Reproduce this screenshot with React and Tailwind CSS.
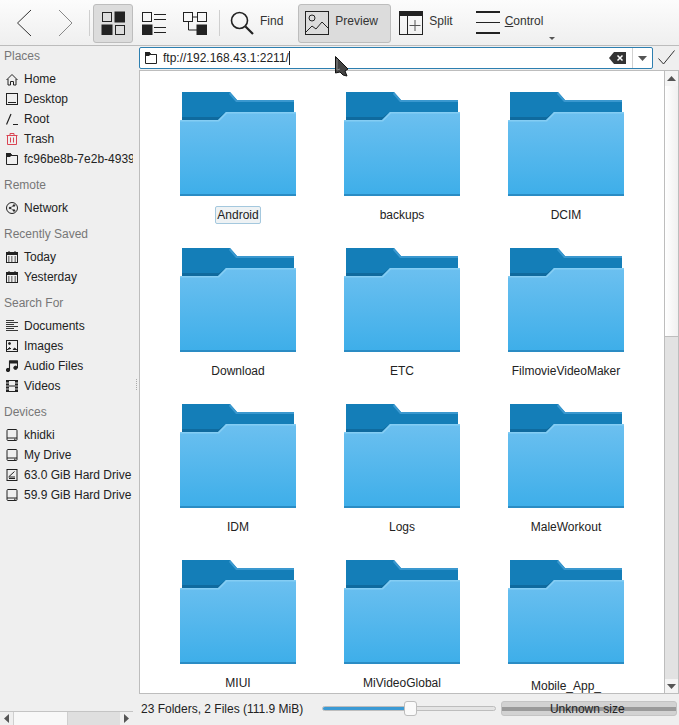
import React from "react";

const K = "#222";

const IconsView = () => (
  <svg width="24" height="24" viewBox="0 0 24 24" fill="none" stroke={K}>
    <rect x="1.5" y="1.5" width="9" height="9" />
    <rect x="14" y="1" width="10" height="10" fill={K} />
    <rect x="1" y="14" width="10" height="10" fill={K} />
    <rect x="14.5" y="14.5" width="9" height="9" />
  </svg>
);
const ListView = () => (
  <svg width="24" height="24" viewBox="0 0 24 24" fill="none" stroke={K}>
    <rect x="0.5" y="1.5" width="9" height="9" />
    <path d="M12 3.5h12M12 8.5h12M12 16.5h12M12 21.5h12" />
    <rect x="0" y="14" width="10" height="10" fill={K} />
  </svg>
);
const TreeView = () => (
  <svg width="24" height="24" viewBox="0 0 24 24" fill="none" stroke={K}>
    <rect x="0.5" y="1.5" width="9" height="9" />
    <rect x="14.5" y="1.5" width="9" height="9" />
    <path d="M9.5 6h5M5.5 10.5v8.500h8.500" />
    <rect x="14" y="14" width="10" height="10" fill={K} />
  </svg>
);
const FindIcon = () => (
  <svg width="24" height="24" viewBox="0 0 24 24" fill="none" stroke={K}>
    <circle cx="9.500" cy="9.500" r="8" strokeWidth="1.600" />
    <path d="M15.500 15.500L23 23" strokeWidth="2.200" />
  </svg>
);
const PreviewIcon = () => (
  <svg width="24" height="24" viewBox="0 0 24 24" fill="none" stroke={K}>
    <rect x="0.500" y="0.500" width="23" height="23" />
    <circle cx="7" cy="7" r="3" />
    <path d="M1 21l6-6 4 3 6-7 6 6" />
  </svg>
);
const SplitIcon = () => (
  <svg width="24" height="24" viewBox="0 0 24 24" fill="none" stroke={K}>
    <rect x="0.500" y="0.500" width="23" height="23" />
    <rect x="0" y="0" width="24" height="5" fill={K} stroke="none" />
    <path d="M8.500 5v19" />
    <path d="M16 9v11M10.500 14.500h11" stroke="#555" />
  </svg>
);
const ControlIcon = () => (
  <svg width="24" height="24" viewBox="0 0 24 24" fill={K}>
    <rect x="0" y="0" width="24" height="2" />
    <rect x="0" y="11" width="24" height="1" />
    <rect x="0" y="21" width="24" height="2" />
  </svg>
);

const FolderSmall = () => (
  <svg width="12" height="12" viewBox="0 0 12 12" fill="none" stroke={K}>
    <path d="M0.500 0.500h4l1.500 2h5.500v9h-11z" />
    <path d="M0 0h4.500l1.500 2.500h6v0.500H5l-1 1H0z" fill={K} stroke="none" />
  </svg>
);

const iconProps = { width: 12, height: 12, viewBox: "0 0 12 12", fill: "none", stroke: K };

const sideIcons = {
  home: (
    <svg {...{ ...iconProps, width: 13, height: 13 }}>
      <path d="M0.500 6.500L6 1l5.500 5.500M2 5.500v6h2.500V8h3v3.500H10v-6" />
    </svg>
  ),
  desktop: (
    <svg {...iconProps}>
      <rect x="0.500" y="0.500" width="11" height="11" />
      <path d="M2 9.500h8" />
    </svg>
  ),
  root: (
    <svg {...iconProps}>
      <path d="M0.500 11.500L5 1M7 11.500h5" strokeWidth="1.200" />
    </svg>
  ),
  trash: (
    <svg {...iconProps} stroke="#da4453">
      <path d="M0.500 2.500h11M4 2.500V0.500h4v2M1.500 2.500v9h9v-9M4.500 4.500v5M7.500 4.500v5" />
    </svg>
  ),
  folder: <FolderSmall />,
  network: (
    <svg {...iconProps}>
      <circle cx="6" cy="6" r="5.500" />
      <circle cx="4" cy="6" r="0.800" fill={K} />
      <circle cx="8" cy="3.500" r="0.800" fill={K} />
      <circle cx="8" cy="8.500" r="0.800" fill={K} />
      <path d="M4 6l4-2.500M4 6l4 2.500" strokeWidth="0.600" />
    </svg>
  ),
  calendar: (
    <svg {...iconProps}>
      <rect x="0.500" y="1.500" width="11" height="10" />
      <path d="M0 2h12v1.500H0zM3 0v2M9 0v2" fill={K} />
      <path d="M2 6h1.500M5 6h1.500M8.500 6H10M2 8h1.500M5 8h1.500M8.500 8H10M2 10h1.500M5 10h1.500M8.500 10H10" strokeWidth="1.100" />
    </svg>
  ),
  docs: (
    <svg {...iconProps}>
      <path d="M0 0.500h8M0 2.500h12M0 4.500h8M0 6.500h12M0 8.500h8M0 10.500h12" strokeWidth="0.900" />
    </svg>
  ),
  image: (
    <svg {...iconProps}>
      <rect x="0.500" y="0.500" width="11" height="11" />
      <circle cx="3.500" cy="3.500" r="1" fill={K} />
      <path d="M1 10l2.500-2.500 1.500 1.500 M7 10l1.500-2 2.500 2" fill={K} />
    </svg>
  ),
  audio: (
    <svg {...iconProps}>
      <path d="M3.500 10V1h8v7" strokeWidth="1.100" />
      <path d="M3.500 1h8v2h-8z" fill={K} />
      <circle cx="2" cy="10" r="1.700" fill={K} />
      <circle cx="9.500" cy="7.800" r="1.700" fill={K} />
    </svg>
  ),
  video: (
    <svg {...iconProps}>
      <rect x="0.500" y="0.500" width="11" height="11" />
      <path d="M0 0h3v12H0zM9 0h3v12H9z" fill={K} stroke="none" />
      <path d="M0 3h3M0 6h3M0 9h3M9 3h3M9 6h3M9 9h3" stroke="#eee" strokeWidth="0.800" />
      <path d="M3 6h6" />
    </svg>
  ),
  drive: (
    <svg {...iconProps}>
      <rect x="1" y="0.500" width="10" height="11" rx="1" />
      <path d="M1 9h10" />
      <path d="M8 10.200h1.500" />
    </svg>
  ),
  driveMounted: (
    <svg {...iconProps}>
      <rect x="1" y="0.500" width="10" height="11" />
      <path d="M2.500 8L8.500 2.500M3 8h6M3 9.500h6" />
    </svg>
  ),
};

const sections = [
  {
    title: "Places",
    first: true,
    items: [
      ["home", "Home"],
      ["desktop", "Desktop"],
      ["root", "Root"],
      ["trash", "Trash"],
      ["folder", "fc96be8b-7e2b-4939-a1b2"],
    ],
  },
  { title: "Remote", items: [["network", "Network"]] },
  {
    title: "Recently Saved",
    items: [
      ["calendar", "Today"],
      ["calendar", "Yesterday"],
    ],
  },
  {
    title: "Search For",
    items: [
      ["docs", "Documents"],
      ["image", "Images"],
      ["audio", "Audio Files"],
      ["video", "Videos"],
    ],
  },
  {
    title: "Devices",
    items: [
      ["drive", "khidki"],
      ["drive", "My Drive"],
      ["driveMounted", "63.0 GiB Hard Drive"],
      ["drive", "59.9 GiB Hard Drive"],
    ],
  },
];

const folders = [
  "Android",
  "backups",
  "DCIM",
  "Download",
  "ETC",
  "FilmovieVideoMaker",
  "IDM",
  "Logs",
  "MaleWorkout",
  "MIUI",
  "MiVideoGlobal",
  "Mobile_App_",
];

const FolderIcon = () => (
  <svg className="shrink-0" width="116" height="104" viewBox="0 0 116 104">
    <defs>
      <linearGradient id="front" x1="0" y1="0" x2="0" y2="1">
        <stop offset="0" stopColor="#6cc0f0" />
        <stop offset="1" stopColor="#3daee9" />
      </linearGradient>
    </defs>
    <path d="M2 0h48l7 8h57v20H2z" fill="#147eb8" />
    <path d="M50 0l7 8h57v2H56l-7-8z" fill="#3a98cf" />
    <path d="M0 28h38l8-8h70v84H0z" fill="url(#front)" />
    <path d="M2 25h37l7-5 -8 8H2z" fill="#0f6a9e" />
    <path d="M0 28h38l8-8h70v1.500H47l-8 8H0z" fill="#84cdf4" />
    <rect x="0" y="102" width="116" height="2" fill="#2a8cc4" />
  </svg>
);

const Arrow = ({ dir }) => {
  const paths = { up: "M0 5L4.500 0 9 5z", down: "M0 0L4.500 5 9 0z", left: "M5 0v9L0 4.500z", right: "M0 0v9l5-4.500z" };
  const box = dir === "up" || dir === "down" ? [9, 5] : [5, 9];
  return (
    <svg width={box[0]} height={box[1]} viewBox={`0 0 ${box[0]} ${box[1]}`} fill="#555">
      <path d={paths[dir]} />
    </svg>
  );
};

const ToolLabel = ({ children }) => <span className="text-[12px] text-[#333]">{children}</span>;

export default function App() {
  return (
    <div
      className="relative w-[679px] h-[725px] overflow-hidden bg-[#efefef] flex flex-col text-[12px] text-[#222]"
      style={{ fontFamily: '"Liberation Sans", Arial, sans-serif' }}
    >
      {/* toolbar */}
      <div className="relative h-[46px] shrink-0 flex items-center border-b border-[#bcbcbc] bg-gradient-to-b from-[#fcfcfc] to-[#efefef] pt-[1px]">
        <svg className="ml-[16px]" width="16" height="28" viewBox="0 0 16 28" fill="none" stroke="#333">
          <path d="M15 1L1.500 14 15 27" />
        </svg>
        <svg className="ml-[26px]" width="15" height="28" viewBox="0 0 15 28" fill="none" stroke="#888">
          <path d="M1 1l13 13L1 27" />
        </svg>
        <div className="ml-[16px] w-px h-[26px] bg-[#cfcfcf]" />
        <div className="ml-[3px] w-[40px] h-[39px] flex items-center justify-center rounded-[3px] border border-[#bdbdbd] bg-[#dcdcdc]">
          <IconsView />
        </div>
        <div className="ml-[9px]"><ListView /></div>
        <div className="ml-[17px]"><TreeView /></div>
        <div className="ml-[12px] w-px h-[26px] bg-[#cfcfcf]" />
        <div className="ml-[10px]"><FindIcon /></div>
        <div className="ml-[6px] mb-[4px]"><ToolLabel>Find</ToolLabel></div>
        <div className="ml-[15px] w-[93px] h-[39px] pl-[6px] flex items-center gap-[6px] rounded-[3px] border border-[#bdbdbd] bg-[#dcdcdc]">
          <PreviewIcon />
          <div className="mb-[4px]"><ToolLabel>Preview</ToolLabel></div>
        </div>
        <div className="ml-[8px]"><SplitIcon /></div>
        <div className="ml-[6px] mb-[4px]"><ToolLabel>Split</ToolLabel></div>
        <div className="ml-[23px]"><ControlIcon /></div>
        <div className="ml-[5px] mb-[4px]">
          <ToolLabel><span className="underline">C</span>ontrol</ToolLabel>
        </div>
        <svg className="absolute left-[549px] top-[37px]" width="6" height="3" viewBox="0 0 6 3" fill="#555">
          <path d="M0 0h6L3 3z" />
        </svg>
      </div>

      <div className="flex-1 flex min-h-0">
        {/* places panel */}
        <div className="relative w-[139px] shrink-0 flex flex-col">
          <div className="flex-1 overflow-hidden">
            {sections.map((s) => (
              <div key={s.title}>
                <div className={s.first ? "h-[23px] pl-[4px] pb-[4px] flex items-center text-[#777]" : "h-[29px] pl-[4px] pt-[2px] flex items-center text-[#777]"}>
                  {s.title}
                </div>
                {s.items.map(([icon, label]) => (
                  <div key={label} className="h-[20px] w-[133px] overflow-hidden flex items-center pl-[6px]">
                    <span className="w-[12px] h-[13px] shrink-0 flex items-center">{sideIcons[icon]}</span>
                    <span className="ml-[6px] whitespace-nowrap">{label}</span>
                  </div>
                ))}
              </div>
            ))}
          </div>
          <div className="absolute left-[136px] top-[333px] flex flex-col gap-[1px]">
            {[0, 1, 2, 3, 4, 5].map((i) => (
              <div key={i} className="w-px h-px bg-[#aaa]" />
            ))}
          </div>
          {/* panel scrollbar */}
          <div className="w-[133px] h-[14px] flex items-stretch border-t border-[#c4c4c4]">
            <div className="w-[13px] flex items-center justify-center"><Arrow dir="left" /></div>
            <div className="w-[55px] bg-[#f8f8f8] border-x border-[#cfcfcf]" />
            <div className="flex-1 bg-[#dfdfdf]" />
            <div className="w-[13px] flex items-center justify-center"><Arrow dir="right" /></div>
          </div>
        </div>

        <div className="flex-1 flex flex-col min-w-0">
          {/* location bar */}
          <div className="h-[24px] shrink-0 flex items-start pt-[1px]">
            <div className="w-[514px] h-[22px] flex items-center rounded-[2px] border border-[#2d7fb0] bg-white pl-[5px]">
              <FolderSmall />
              <span className="ml-[6px] text-[#222]">ftp://192.168.43.1:2211/</span>
              <span className="w-px h-[14px] bg-[#222]" />
              <svg className="ml-auto" width="17" height="12" viewBox="0 0 17 12">
                <path d="M5 0h12v12H5L0 6z" fill="#333" />
                <path d="M8.500 3.500l5 5M13.500 3.500l-5 5" stroke="#fff" strokeWidth="1.500" />
              </svg>
              <div className="ml-[6px] w-px h-[20px] bg-[#d0d0d0]" />
              <div className="w-[19px] flex justify-center"><Arrow dir="down" /></div>
            </div>
            <svg className="ml-[5px] mt-[3px]" width="17" height="15" viewBox="0 0 17 15" fill="none" stroke="#333">
              <path d="M0.500 8.500l5 5.500L16.500 0.500" />
            </svg>
          </div>

          {/* icon view */}
          <div className="flex-1 flex min-h-0 border border-[#bdbdbd] bg-white">
            <div className="flex-1 overflow-hidden">
              <div className="ml-[16px] grid grid-cols-[164px_164px_164px]">
                {folders.map((name, i) => (
                  <div key={name} className="h-[156px] pt-[21px] flex flex-col items-center">
                    <FolderIcon />
                    <div className={i === 11 ? "mt-[13px] leading-[16px] text-center" : "mt-[10px] leading-[16px] text-center"}>
                      {i === 0 ? (
                        <span className="block px-[1px] rounded-[2px] border border-[#a4c8de] bg-[#eef2f4]">{name}</span>
                      ) : (
                        <span className="block py-[1px]">{name}</span>
                      )}
                    </div>
                  </div>
                ))}
              </div>
            </div>
            <div className="w-[14px] shrink-0 flex flex-col border-l border-[#bdbdbd] bg-[#e2e2e2]">
              <div className="h-[15px] bg-[#f4f4f4] flex items-center justify-center"><Arrow dir="up" /></div>
              <div className="h-[251px] bg-gradient-to-r from-[#ffffff] to-[#f0f0f0] border-b border-[#bdbdbd]" />
              <div className="flex-1" />
              <div className="h-[14px] bg-[#f4f4f4] flex items-center justify-center"><Arrow dir="down" /></div>
            </div>
          </div>

          {/* status bar */}
          <div className="h-[31px] shrink-0 flex items-center pl-[2px] pb-[2px]">
            <span className="whitespace-nowrap">23 Folders, 2 Files (111.9 MiB)</span>
            <div className="ml-[19px] relative w-[174px] h-[5px] flex rounded-full border border-[#bdbdbd] bg-[#e4e4e4]">
              <div className="w-[87px] rounded-l-full bg-[#3b9ad4]" />
              <div className="absolute left-[81px] top-[-6px] w-[13px] h-[15px] rounded-[3px] border border-[#bdbdbd] bg-[#fafafa]" />
            </div>
            <div className="ml-[5px] relative w-[176px] h-[15px] pr-[4px] rounded-[3px] border border-[#c4c4c4] bg-[#d2d2d2] flex items-center justify-center overflow-hidden">
              <div className="absolute inset-x-0 top-[5px] h-[4px] bg-[#9a9a9a]" />
              <span className="relative text-[#222]">Unknown size</span>
            </div>
          </div>
        </div>
      </div>

      {/* mouse cursor over the location bar */}
      <svg className="absolute left-[335px] top-[56px]" width="14" height="21" viewBox="0 0 14 21">
        <path d="M0.500 0.500L13 13l-3 2 2 5-4-1-3-3-4.500 1z" fill="#444" stroke="#111" />
        <path d="M2 3v11l3-1" fill="none" stroke="#888" />
      </svg>
    </div>
  );
}
